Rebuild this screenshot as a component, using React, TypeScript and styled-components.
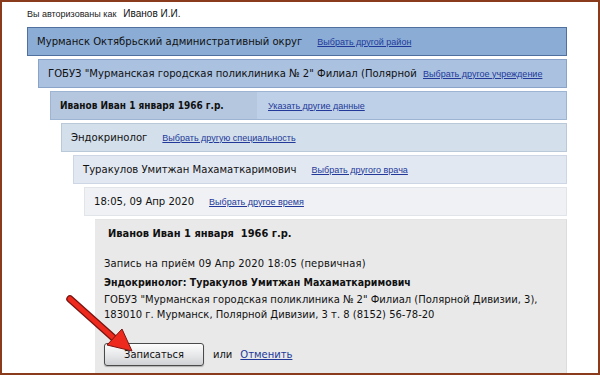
import React from 'react';
import styled, { createGlobalStyle } from 'styled-components';

const GlobalStyle = createGlobalStyle`
  html, body {
    margin: 0;
    padding: 0;
    background: #ffffff;
  }
  body {
    font-family: "DejaVu Sans", Verdana, sans-serif;
  }
`;

const condensed = `
  font-family: "DejaVu Sans Condensed", "DejaVu Sans", Verdana, sans-serif;
  font-stretch: condensed;
`;

type Step = {
  label: string;
  link: string;
  bold?: boolean;
  bg: string;
  border: string;
  cell?: string;
  labelWidth?: number;
  linkGap?: number;
};

// the institution name is cut by its cell in the original page
const steps: Step[] = [
  {
    label: 'Мурманск Октябрьский административный округ',
    link: 'Выбрать другой район',
    bg: '#8badd5',
    border: '#50709f',
  },
  {
    label: 'ГОБУЗ "Мурманская городская поликлиника № 2" Филиал (Полярной',
    link: 'Выбрать другое учреждение',
    bg: '#aac2e0',
    border: '#89a4c8',
    labelWidth: 379,
    linkGap: 5,
  },
  {
    label: 'Иванов Иван 1 января 1966 г.р.',
    link: 'Указать другие данные',
    bold: true,
    bg: '#bed0e7',
    border: '#9db4d2',
    cell: '#b4c7df',
    labelWidth: 206,
    linkGap: 11,
  },
  {
    label: 'Эндокринолог',
    link: 'Выбрать другую специальность',
    bg: '#d3dfea',
    border: '#b9c9d9',
  },
  {
    label: 'Туракулов Умитжан Махаматкаримович',
    link: 'Выбрать другого врача',
    bg: '#e2e8f2',
    border: '#ccd6e4',
  },
  {
    label: '18:05, 09 Апр 2020',
    link: 'Выбрать другое время',
    bg: '#eff1f4',
    border: '#e1e4e9',
  },
];

const App: React.FC = () => {
  return (
    <>
      <GlobalStyle />
      <Frame>
        <Header>
          <HeaderLabel>Вы авторизованы как</HeaderLabel>
          <HeaderUser>Иванов И.И.</HeaderUser>
        </Header>
        <Steps>
          {steps.map((s, i) => (
            <Band key={s.label} level={i} bg={s.bg} border={s.border}>
              <Label bold={s.bold} cell={s.cell} fixed={s.labelWidth}>
                {s.label}
              </Label>
              <StepLink href="#" gap={s.linkGap ?? 15}>
                {s.link}
              </StepLink>
            </Band>
          ))}
          <Panel level={6}>
            <PatientName>Иванов Иван 1 января&nbsp; 1966 г.р.</PatientName>
            <Details>
              <Line>Запись на приём 09 Апр 2020 18:05 (первичная)</Line>
              <Line strong>Эндокринолог: Туракулов Умитжан Махаматкаримович</Line>
              <Address>
                ГОБУЗ "Мурманская городская поликлиника № 2" Филиал (Полярной Дивизии, 3),
                <br />
                183010 г. Мурманск, Полярной Дивизии, 3 т. 8 (8152) 56-78-20
              </Address>
            </Details>
            <Actions>
              <SubmitButton type="button">Записаться</SubmitButton>
              <Or>или</Or>
              <CancelLink href="#">Отменить</CancelLink>
            </Actions>
          </Panel>
        </Steps>
        <Arrow width="80" height="70" viewBox="0 0 80 70">
          <line x1="8" y1="8" x2="55" y2="50" stroke="#7a1410" strokeWidth="7.5" strokeLinecap="round" />
          <line x1="8" y1="8" x2="55" y2="50" stroke="#ee2a1e" strokeWidth="5" strokeLinecap="round" />
          <polygon points="70,60 45,54 60,38" fill="#ee2a1e" stroke="#7a1410" strokeWidth="1" />
        </Arrow>
      </Frame>
    </>
  );
};

export default App;

// Styled components

const Frame = styled.div`
  position: relative;
  width: 600px;
  height: 375px;
  box-sizing: border-box;
  border: 2px solid #8a3b1b;
  background: #ffffff;
  overflow: hidden;
  padding: 6px 31px 0 25px;
  color: #111111;
`;

const Header = styled.div`
  display: flex;
  align-items: baseline;
  gap: 7px;
  height: 19px;
  font-family: "Liberation Sans", Arial, sans-serif;
`;

const HeaderLabel = styled.span`
  font-size: 9px;
  color: #222222;
`;

const HeaderUser = styled.span`
  font-size: 10px;
  color: #111111;
`;

const Steps = styled.div`
  display: flex;
  flex-direction: column;
  gap: 3px;
`;

const Band = styled.div<{ level: number; bg: string; border: string }>`
  display: flex;
  align-items: center;
  height: 29px;
  box-sizing: border-box;
  margin-left: ${({ level }) => Math.round(level * 11.4)}px;
  background: ${({ bg }) => bg};
  border: 1px solid ${({ border }) => border};
`;

const Label = styled.span<{ bold?: boolean; cell?: string; fixed?: number }>`
  ${condensed}
  display: flex;
  align-items: center;
  align-self: stretch;
  flex: none;
  box-sizing: border-box;
  padding-left: 9px;
  ${({ fixed }) => (fixed ? `width: ${fixed}px;` : '')}
  white-space: nowrap;
  font-size: ${({ bold }) => (bold ? '10px' : '11.2px')};
  font-weight: ${({ bold }) => (bold ? 'bold' : 'normal')};
  background: ${({ cell }) => cell || 'transparent'};
`;

const StepLink = styled.a<{ gap: number }>`
  font-family: "Liberation Sans", Arial, sans-serif;
  font-size: 9px;
  color: #22399a;
  text-decoration: underline;
  white-space: nowrap;
  margin-left: ${({ gap }) => gap}px;
`;

const Panel = styled.div<{ level: number }>`
  ${condensed}
  display: flex;
  flex-direction: column;
  height: 160px;
  box-sizing: border-box;
  margin-left: ${({ level }) => Math.round(level * 11.4)}px;
  padding: 7px 0 0 9px;
  background: #e9e9e9;
  border-right: 1px solid #dcdcdc;
  border-top: 1px solid #e4e4e4;
  font-size: 11.1px;
`;

const PatientName = styled.div`
  font-size: 11px;
  font-weight: bold;
  padding-left: 4px;
  line-height: 14px;
`;

const Details = styled.div`
  display: flex;
  flex-direction: column;
  margin-top: 13px;
`;

const Line = styled.div<{ strong?: boolean }>`
  font-size: ${({ strong }) => (strong ? '10.5px' : '11.1px')};
  letter-spacing: ${({ strong }) => (strong ? '0' : '0.15px')};
  line-height: 19px;
  font-weight: ${({ strong }) => (strong ? 'bold' : 'normal')};
  white-space: nowrap;
`;

const Address = styled.div`
  line-height: 15px;
  white-space: nowrap;
`;

const Actions = styled.div`
  display: flex;
  align-items: center;
  gap: 8px;
  margin-top: 21px;
`;

const SubmitButton = styled.button`
  ${condensed}
  width: 100px;
  height: 23px;
  box-sizing: border-box;
  border: 1px solid #4a4a4a;
  border-radius: 3px;
  background: linear-gradient(#fdfdfd, #e6e7e9 55%, #cfd1d4);
  box-shadow: 0 1px 1px rgba(0, 0, 0, 0.25);
  font-size: 11px;
  color: #111111;
  padding: 0;
`;

const Or = styled.span`
  margin-left: 1px;
`;

const CancelLink = styled.a`
  color: #22399a;
  text-decoration: underline;
`;

const Arrow = styled.svg`
  position: absolute;
  left: 60px;
  top: 289px;
`;
